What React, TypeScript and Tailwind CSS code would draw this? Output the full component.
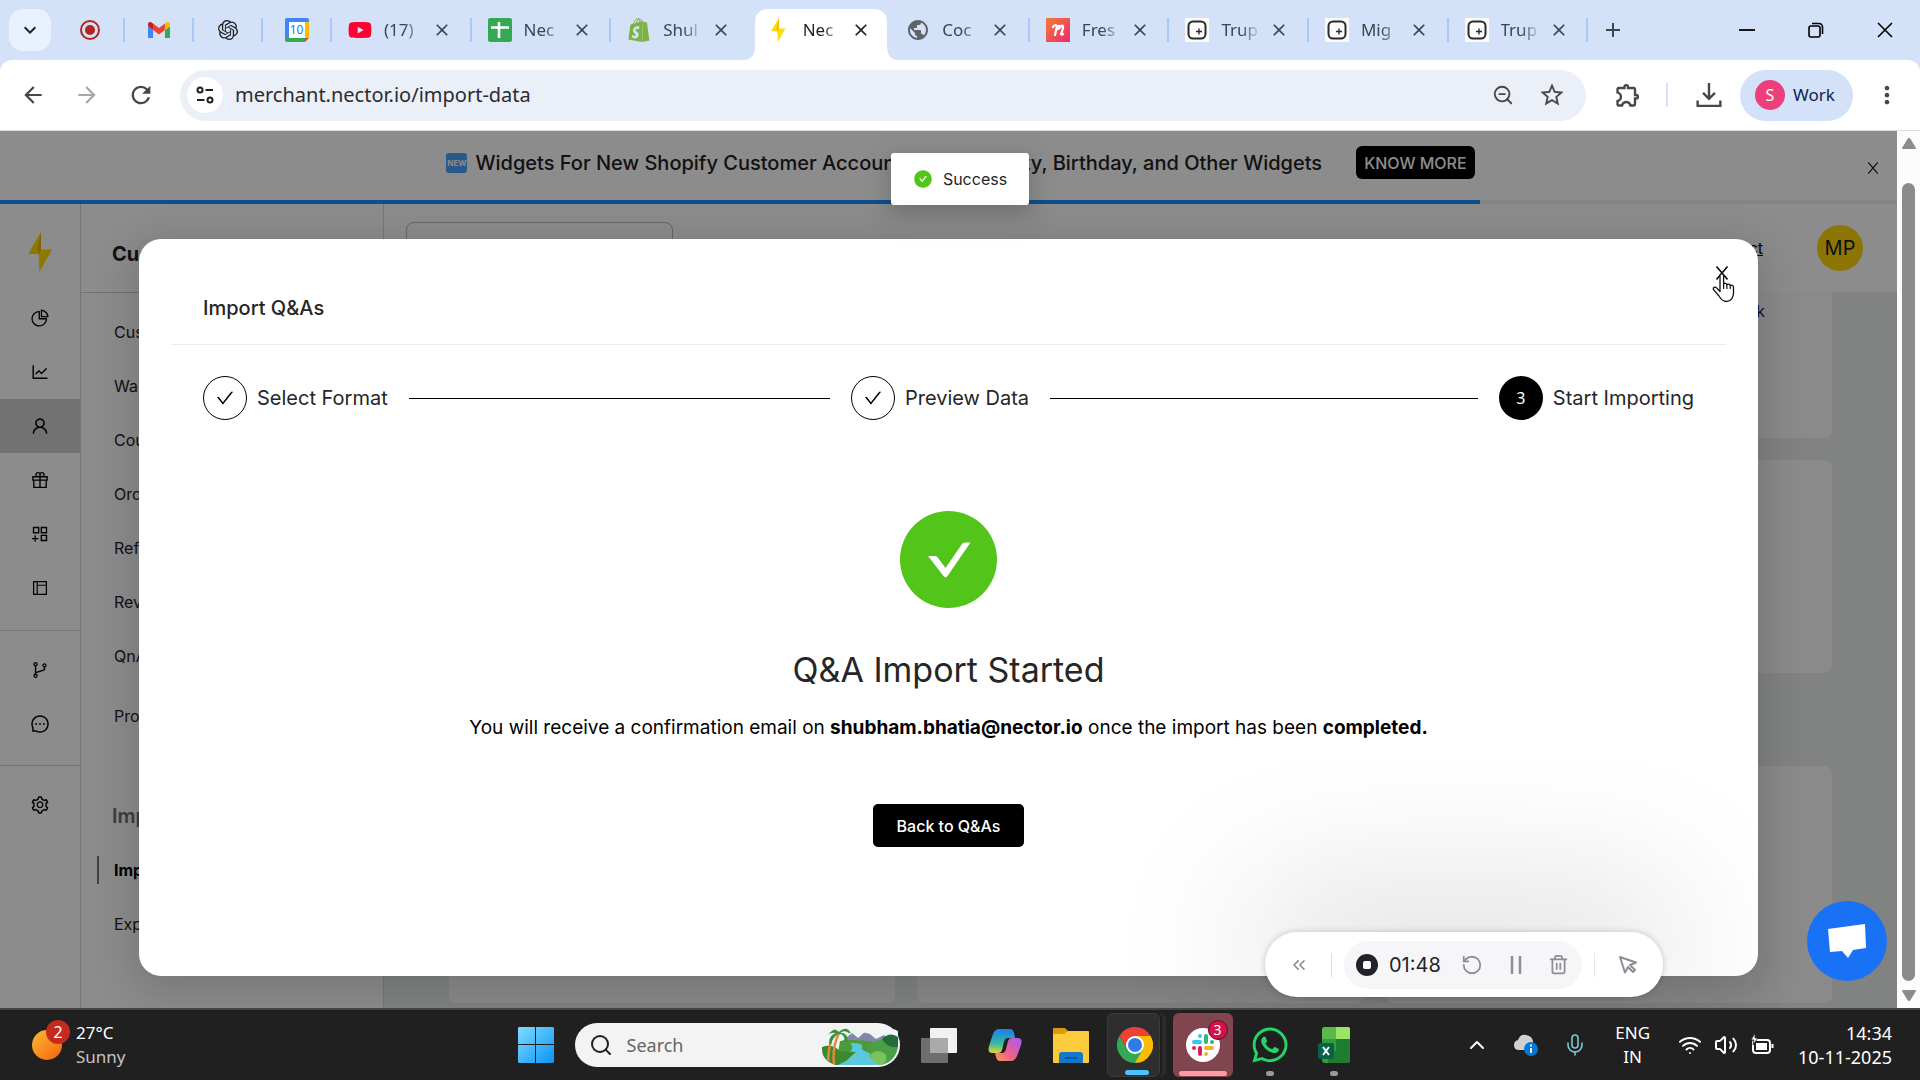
import type { ReactNode } from "react";
import {
  AiOutlineAppstoreAdd, AiOutlineBranches, AiOutlineCheck, AiOutlineGift, AiOutlineLayout,
  AiOutlineLineChart, AiOutlineMessage, AiOutlinePieChart, AiOutlineSetting, AiOutlineUser, AiFillCheckCircle,
} from "react-icons/ai";
import { SiOpenai, SiShopify } from "react-icons/si";
import { FaYoutube, FaWhatsapp } from "react-icons/fa";
import {
  MdArrowBack, MdArrowForward, MdRefresh, MdStarOutline, MdOutlineExtension, MdMoreVert, MdClose, MdAdd,
  MdKeyboardArrowDown, MdPublic,
} from "react-icons/md";
import { ChevronsLeft, ChevronUp, Mic, RotateCcw, Trash2, Volume2, Wifi, ZoomOut, Search } from "lucide-react";

const Bolt = ({ className }: { className: string }) => (
  <svg viewBox="0 0 24 40" className={className} aria-hidden="true">
    <path d="M13 0 0 22h10.500L11.500 40 24 17.500H13z" fill="#ffdc00" />
    <path d="M13 0 9 18l2.500 4 1.500-4.500z" fill="#f2b600" />
  </svg>
);

const Cross = ({ className }: { className: string }) => (
  <svg viewBox="0 0 14 14" className={className} aria-hidden="true">
    <path d="M1.500 0.500 12.500 13.500M12.500 0.500 1.500 13.500" stroke="currentColor" strokeWidth="1.500" />
  </svg>
);

const Gmail = () => (
  <svg viewBox="0 0 24 18" className="w-[22px]">
    <path d="M1.600 18H5.500V8.700L0 4.600v11.800C0 17.300.7 18 1.600 18z" fill="#4285f4" />
    <path d="M18.500 18h3.900c.9 0 1.600-.7 1.600-1.600V4.600l-5.500 4.100z" fill="#34a853" />
    <path d="M18.500 1.600v7.100L24 4.600V2.400C24 .4 21.700-.7 20.100.5z" fill="#fbbc04" />
    <path d="M5.500 8.700V1.600L12 6.500l6.500-4.900v7.100L12 13.600z" fill="#ea4335" />
    <path d="M0 2.400v2.200l5.500 4.100V1.600L3.900.5C2.300-.7 0 .4 0 2.400z" fill="#c5221f" />
  </svg>
);

const Record = () => (
  <svg viewBox="0 0 24 24" className="w-6">
    <circle cx="12" cy="12" r="9" fill="none" stroke="#b3261e" strokeWidth="2" />
    <circle cx="12" cy="12" r="5" fill="#b3261e" />
  </svg>
);

const Calendar = () => (
  <span className="relative flex size-6 items-center justify-center">
    <svg viewBox="0 0 24 24" className="absolute inset-0">
      <path d="M0 2a2 2 0 0 1 2-2h20a2 2 0 0 1 2 2v3H0z" fill="#4285f4" />
      <path d="M0 4h4v16H0z" fill="#4285f4" />
      <path d="M20 4h4v16h-4z" fill="#fbbc04" />
      <path d="M0 20h20v4H2a2 2 0 0 1-2-2z" fill="#34a853" />
      <path d="M20 20h4l-4 4z" fill="#ea4335" />
      <path d="M4 4h16v16H4z" fill="#fff" />
    </svg>
    <span className="relative text-xs leading-none text-[#1a73e8]">10</span>
  </span>
);

const Sheets = () => (
  <svg viewBox="0 0 24 24" className="w-6">
    <rect width="24" height="24" rx="2" fill="#34a853" />
    <path d="M11 4v16M3 9.500h18" stroke="#fff" strokeWidth="2.600" />
  </svg>
);

const Fresh = () => (
  <svg viewBox="0 0 24 24" className="w-6">
    <defs>
      <linearGradient id="fresh" x1="0" y1="0" x2="1" y2="1">
        <stop offset="0" stopColor="#f47b3a" /><stop offset="1" stopColor="#ee2a6b" />
      </linearGradient>
    </defs>
    <rect width="24" height="24" fill="url(#fresh)" />
    <path d="M7 9q2-3 4-1l-2 9M10 12q2-5 4-4 2 1-2 3M14 9q4-3 3 1t-2 6q1 1 2 0" stroke="#fff" strokeWidth="2.200" fill="none" strokeLinecap="round" />
  </svg>
);

const Spark = () => (
  <svg viewBox="0 0 24 24" className="w-6">
    <rect width="24" height="24" fill="#fbfbfb" />
    <rect x="3.500" y="3.500" width="17" height="17" rx="4.500" fill="none" stroke="#2a2a2a" strokeWidth="2" />
    <path d="M14 10.500v6M11 13.500h6" stroke="#2a2a2a" strokeWidth="1.400" />
  </svg>
);

const tabs: { title: string; icon: ReactNode; active?: boolean; line?: boolean }[] = [
  { title: "(17)", icon: <FaYoutube className="size-6 text-[#ff0033]" />, line: true },
  { title: "Nec", icon: <Sheets />, line: true },
  { title: "Shul", icon: <SiShopify className="size-6 text-[#7cb342]" /> },
  { title: "Nec", icon: <Bolt className="h-6" />, active: true },
  { title: "Coc", icon: <MdPublic className="size-6 text-[#5f6368]" />, line: true },
  { title: "Fres", icon: <Fresh />, line: true },
  { title: "Trup", icon: <Spark />, line: true },
  { title: "Mig", icon: <Spark />, line: true },
  { title: "Trup", icon: <Spark />, line: true },
];

const pinned: { label: string; icon: ReactNode }[] = [
  { label: "Recorder", icon: <Record /> },
  { label: "Gmail", icon: <Gmail /> },
  { label: "ChatGPT", icon: <SiOpenai className="size-5" /> },
  { label: "Calendar", icon: <Calendar /> },
];

function TabStrip() {
  return (
    <div className="flex h-[60px] shrink-0 items-center bg-[#d3e1f9] text-[#3c4650]">
      <button aria-label="Search tabs" className="ml-[9px] mr-[5px] flex size-[42px] items-center justify-center rounded-[14px] bg-[#e9f1fe] text-[#1f1f1f]">
        <MdKeyboardArrowDown className="size-6" />
      </button>
      {pinned.map((p) => (
        <button key={p.label} aria-label={p.label} className="flex h-6 w-[69px] items-center justify-center border-r-2 border-[#a8c7fa] text-[#1f1f1f]">
          {p.icon}
        </button>
      ))}
      <div className="flex h-full w-[1256px] min-w-0 items-center">
        {tabs.map((t, i) => (
          <div key={i} className={t.active ? "relative flex h-full min-w-0 flex-1 flex-col justify-end" : "flex h-full min-w-0 flex-1 items-center"}>
            {t.active && (
              <svg viewBox="0 0 156 51" preserveAspectRatio="none" className="absolute -left-2 bottom-0 h-[51px] w-[156px]" aria-hidden="true">
                <path d="M0 51q12 0 12-14V14Q12 0 26 0h104q14 0 14 14v23q0 14 12 14z" fill="#fff" />
              </svg>
            )}
            <div className={t.active ? "relative mb-[18px] flex h-6 items-center pl-4 text-[#1f1f1f]" : t.line ? "flex h-6 w-full items-center border-r-2 border-[#a8c7fa] pl-4" : "flex h-6 w-full items-center pl-4"}>
              <span className="flex w-6 shrink-0 justify-center">{t.icon}</span>
              <span className="ml-3 w-10 shrink-0 whitespace-nowrap text-[17px] leading-6 [mask-image:linear-gradient(to_right,black_50%,transparent_100%)]">{t.title}</span>
              <button aria-label="Close tab" className="ml-2"><MdClose className="size-5" /></button>
            </div>
          </div>
        ))}
      </div>
      <button aria-label="New tab" className="ml-[13px]"><MdAdd className="size-6" /></button>
      <div className="ml-auto flex w-[208px] text-black">
        <button aria-label="Minimize" className="flex flex-1 justify-center">
          <svg viewBox="0 0 16 16" className="size-4"><path d="M0 8h16" stroke="currentColor" strokeWidth="1.800" /></svg>
        </button>
        <button aria-label="Restore" className="flex flex-1 justify-center">
          <svg viewBox="0 0 16 16" className="size-4" fill="none" stroke="currentColor" strokeWidth="1.600"><rect x="1" y="4" width="11" height="11" rx="2" /><path d="M4 1.500h7a3.500 3.500 0 0 1 3.500 3.500v7" /></svg>
        </button>
        <button aria-label="Close" className="flex flex-1 justify-center">
          <svg viewBox="0 0 16 16" className="size-4"><path d="m1 1 14 14M15 1 1 15" stroke="currentColor" strokeWidth="1.600" /></svg>
        </button>
      </div>
    </div>
  );
}

function Toolbar() {
  return (
    <div className="bg-[#d3e1f9]">
      <div className="flex h-[71px] items-center rounded-t-xl border-b border-[#dcdcdc] bg-white text-[#474747]">
        <button aria-label="Back" className="ml-5"><MdArrowBack className="size-[26px]" /></button>
        <button aria-label="Forward" className="ml-7 text-[#a8a8a8]"><MdArrowForward className="size-[26px]" /></button>
        <button aria-label="Reload" className="ml-[27px]"><MdRefresh className="size-7" /></button>
        <div className="ml-[25px] flex h-[51px] min-w-0 flex-1 items-center rounded-full bg-[#ebeff8] pl-[7px] pr-5">
          <button aria-label="Site information" className="flex size-9 items-center justify-center rounded-full bg-white text-[#1f1f1f]">
            <svg viewBox="0 0 20 20" className="size-5" fill="none" stroke="currentColor" strokeWidth="2">
              <circle cx="5" cy="5" r="2.500" /><path d="M10.500 5H18M2 15h7.500" /><circle cx="15" cy="15" r="2.500" />
            </svg>
          </button>
          <input aria-label="Address" defaultValue="merchant.nector.io/import-data" className="ml-3 min-w-0 flex-1 bg-transparent text-xl text-[#2b2c2e] outline-none" />
          <button aria-label="Zoom"><ZoomOut className="size-[22px]" strokeWidth={2} /></button>
          <button aria-label="Bookmark" className="ml-6"><MdStarOutline className="size-7" /></button>
        </div>
        <button aria-label="Extensions" className="ml-7"><MdOutlineExtension className="size-7" /></button>
        <div className="ml-6 h-6 w-[2px] bg-[#d3e1f9]" />
        <button aria-label="Downloads" className="ml-7">
          <svg viewBox="0 0 24 24" className="size-[26px]" fill="none" stroke="currentColor" strokeWidth="2.200"><path d="M12 1v14M6.500 10l5.500 5.500L17.500 10M1.500 17v5h21v-5" /></svg>
        </button>
        <button className="ml-[18px] flex h-[51px] w-[113px] items-center rounded-full bg-[#d3e1f9] pl-[15px] text-[17px] text-[#0b2450]">
          <span className="mr-2 flex size-[30px] items-center justify-center rounded-full bg-[#ec407a] text-base text-white">S</span>
          Work
        </button>
        <button aria-label="Menu" className="ml-5 mr-[19px]"><MdMoreVert className="size-7" /></button>
      </div>
    </div>
  );
}

const subNav = ["Customers", "Wallets", "Coupons", "Orders", "Referrals", "Reviews", "QnAs"];

function RailButton({ label, active, children }: { label: string; active?: boolean; children: ReactNode }) {
  return (
    <button aria-label={label} className={active ? "flex h-[54px] w-full items-center justify-center bg-[#d0d0d0]" : "flex h-[54px] w-full items-center justify-center"}>
      {children}
    </button>
  );
}

function Dashboard() {
  return (
    <div className="flex h-full flex-col overflow-hidden bg-white text-[#222]">
      <div className="flex h-[69px] shrink-0 items-start">
        <div className="flex min-w-0 flex-1 items-center justify-center pl-[54px] pt-[15px]">
          <span className="mr-2 flex h-5 w-[21px] items-center justify-center rounded-[3px] bg-[#4aa3f8] text-[8px] font-bold text-white">NEW</span>
          <span className="whitespace-nowrap text-xl font-medium leading-8">Widgets For New Shopify Customer Accounts: New Loyalty, Birthday, and Other Widgets</span>
          <button className="ml-[34px] h-[33px] whitespace-nowrap rounded-md bg-black px-2 text-base font-medium text-white">KNOW MORE</button>
        </div>
        <button aria-label="Dismiss" className="mr-[18px] mt-[31px]"><Cross className="size-3" /></button>
      </div>
      <div className="h-1 shrink-0 bg-[#f0f0f0]"><div className="h-full w-[78%] bg-[#1890ff]" /></div>
      <div className="flex min-h-0 flex-1">
        <nav aria-label="Main" className="flex w-[81px] shrink-0 flex-col items-center border-r border-[#d8d8d8] pt-7 text-black">
          <Bolt className="h-10" />
          <div className="mt-[19px] w-full border-b border-[#d8d8d8] pb-[15px]">
            <RailButton label="Overview"><AiOutlinePieChart className="size-5" /></RailButton>
            <RailButton label="Analytics"><AiOutlineLineChart className="size-5" /></RailButton>
            <RailButton label="Customers" active><AiOutlineUser className="size-5" /></RailButton>
            <RailButton label="Rewards"><AiOutlineGift className="size-5" /></RailButton>
            <RailButton label="Apps"><AiOutlineAppstoreAdd className="size-5" /></RailButton>
            <RailButton label="Layout"><AiOutlineLayout className="size-[18px]" /></RailButton>
          </div>
          <div className="w-full border-b border-[#d8d8d8] pb-[14px] pt-3">
            <RailButton label="Workflows"><AiOutlineBranches className="size-5" /></RailButton>
            <RailButton label="Messages"><AiOutlineMessage className="size-5" /></RailButton>
          </div>
          <div className="w-full pt-3"><RailButton label="Settings"><AiOutlineSetting className="size-5" /></RailButton></div>
        </nav>
        <aside className="w-[303px] shrink-0 border-r border-[#d8d8d8]">
          <h2 className="flex h-[89px] items-center border-b border-[#d0d0d0] pl-[31px] pt-3 text-xl font-bold">Customers</h2>
          <ul className="pl-[33px] pt-3 text-base">
            {subNav.map((s) => <li key={s} className="flex h-[54px] items-center"><a href="#">{s}</a></li>)}
            <li className="mt-[6px] flex h-[54px] items-center"><a href="#">Products</a></li>
          </ul>
          <h3 className="mt-[46px] flex h-[54px] items-center pl-[31px] text-xl font-semibold text-[#6b7078]">Import &amp; Export</h3>
          <ul className="text-base">
            <li className="flex h-[54px] items-center pl-4"><span className="mr-[15px] h-7 w-[2px] bg-[#777]" /><a href="#" className="font-bold text-black">Import</a></li>
            <li className="flex h-[54px] items-center pl-[33px]"><a href="#">Export</a></li>
          </ul>
        </aside>
        <main className="flex min-w-0 flex-1 flex-col bg-[#eceeee]">
          <div className="flex h-[88px] shrink-0 items-center bg-white pl-[22px] pr-[34px]">
            <input aria-label="Search" placeholder="Search" className="h-[52px] w-[267px] rounded-lg border border-[#bbb] px-5" />
            <a href="#" className="ml-auto mr-[54px] text-base text-black underline">Get Support Contact</a>
            <span className="flex size-[46px] items-center justify-center rounded-full bg-[#ffd60a] text-xl">MP</span>
          </div>
          <div className="flex flex-col gap-[22px] px-[65px]">
            <div className="flex h-[146px] justify-end rounded-b-lg bg-[#fcfcfc] pr-[67px] pt-[7px] text-base text-[#1a2560]">Check the import guide and send feedback</div>
            <div className="h-[213px] rounded-lg bg-[#fcfcfc]" />
            <div className="grid grid-cols-3 gap-[22px] pt-[71px]">
              <div className="h-[237px] rounded-lg bg-[#fcfcfc]" />
              <div className="h-[237px] rounded-lg bg-[#fcfcfc]" />
              <div className="h-[237px] rounded-lg bg-[#fcfcfc]" />
            </div>
          </div>
        </main>
      </div>
    </div>
  );
}

function DoneStep({ label }: { label: string }) {
  return (
    <li className="flex flex-1 items-center">
      <span className="mr-[10px] flex size-11 items-center justify-center rounded-full border border-black text-black"><AiOutlineCheck className="size-5" /></span>
      <span className="whitespace-nowrap">{label}</span>
      <span className="ml-[21px] h-px flex-1 bg-black" />
    </li>
  );
}

function ImportModal() {
  return (
    <div role="dialog" aria-labelledby="import-title" className="relative flex w-full flex-col rounded-[22px] bg-white px-8 pt-[51px] text-[#262626] shadow-[0_10px_40px_8px_rgba(0,0,0,0.14)]">
      <button aria-label="Close" className="absolute right-[29px] top-[27px] text-black"><Cross className="size-[14px]" /></button>
      <svg viewBox="0 0 24 30" className="absolute right-[22px] top-[34px] z-10 h-[30px] w-6" aria-hidden="true">
        <path d="M8 2.500c0-2.300 3.600-2.300 3.600 0V11c1-1.300 3-.8 3.300.7 1-1 3-.6 3.300.9 1.200-1 3.300-.3 3.300 1.700V20c0 4.500-2.500 8.500-7 8.500-4 0-5.800-2.500-7.500-5.500L1.600 16.700C.6 14.700 3 13.200 4.600 14.900L8 18.500z" fill="#fff" stroke="#111" strokeWidth="1.300" strokeLinejoin="round" />
        <path d="M11.600 11v5M14.900 11.700V16M18.200 12.600V16" stroke="#111" strokeWidth="1.200" />
      </svg>
      <div className="border-b border-[#ececec] pb-[18px] pl-8">
        <h1 id="import-title" className="text-xl font-medium leading-9">Import Q&amp;As</h1>
      </div>
      <ol className="mx-8 mt-[31px] flex gap-[21px] text-xl">
        <DoneStep label="Select Format" />
        <DoneStep label="Preview Data" />
        <li className="flex items-center">
          <span className="mr-[10px] flex size-11 items-center justify-center rounded-full bg-black font-['Noto_Sans',sans-serif] text-base text-white">3</span>
          <span className="whitespace-nowrap">Start Importing</span>
        </li>
      </ol>
      <div className="mt-[91px] flex flex-col items-center">
        <svg viewBox="0 0 97 97" className="size-[97px]" aria-hidden="true">
          <circle cx="48.500" cy="48.500" r="48.500" fill="#52c41a" />
          <path d="M28 45h7q1.500 0 2.500 1.200l8 10.800 16.500-24q1-1.500 3-1.500h5.500L47.500 65q-2 2.500-4 0z" fill="#fff" />
        </svg>
        <h2 className="mt-10 text-[34px] leading-[44px]">Q&amp;A Import Started</h2>
        <p className="mt-[22px] whitespace-nowrap text-[19px] leading-7 text-black">
          You will receive a confirmation email on <strong>shubham.bhatia@nector.io</strong> once the import has been <strong>completed.</strong>
        </p>
        <button className="mt-[62px] h-[43px] w-[151px] rounded-[5px] bg-black text-base font-medium text-white">Back to Q&amp;As</button>
      </div>
    </div>
  );
}

function RecorderBar() {
  return (
    <div className="absolute bottom-[11px] right-[257px] flex h-[65px] w-[398px] items-center rounded-[32px] bg-white text-[#8e8e98] shadow-[0_0_6px_rgba(0,0,0,0.2),0_-20px_150px_20px_rgba(0,0,0,0.15)]">
      <button aria-label="Collapse" className="ml-6"><ChevronsLeft className="size-5" /></button>
      <span className="ml-[22px] h-6 w-px bg-[#ddd]" />
      <div className="ml-3 flex h-12 w-[238px] items-center rounded-full bg-[#f6f6f9] pl-3">
        <button aria-label="Stop" className="flex size-[22px] items-center justify-center rounded-full bg-[#22222a]"><span className="size-2 rounded-[2px] bg-white" /></button>
        <span className="ml-[11px] w-[52px] text-xl text-[#22222a]">01:48</span>
        <button aria-label="Restart" className="ml-5"><RotateCcw className="size-[22px]" /></button>
        <button aria-label="Pause" className="ml-[22px]">
          <svg viewBox="0 0 22 22" className="size-[22px]"><path d="M7 2v18M15 2v18" stroke="currentColor" strokeWidth="2.500" /></svg>
        </button>
        <button aria-label="Delete" className="ml-[21px]"><Trash2 className="size-[21px]" /></button>
      </div>
      <span className="ml-3 h-6 w-px bg-[#e6e6e6]" />
      <button aria-label="Pointer" className="ml-[22px]">
        <svg viewBox="0 0 22 22" className="size-[22px]" fill="none" stroke="currentColor" strokeWidth="2" strokeLinejoin="round"><path d="M3 3 8 18.500l3-5.500 5 5 2-2-5-5 6-2.500z" /></svg>
      </button>
    </div>
  );
}

function Scrollbar() {
  return (
    <div className="flex w-[23px] shrink-0 flex-col items-center bg-[#fcfcfc] py-[7px]" aria-hidden="true">
      <svg viewBox="0 0 14 11" className="h-[11px] w-[14px] fill-[#8b8b8b]"><path d="M7 0q1 0 1.500 1L14 10q0 1-1 1H1q-1 0-1-1L5.500 1Q6 0 7 0z" /></svg>
      <div className="mb-[9px] mt-[34px] w-[13px] flex-1 rounded-full bg-[#8b8b8b]" />
      <svg viewBox="0 0 14 11" className="h-[11px] w-[14px] rotate-180 fill-[#8b8b8b]"><path d="M7 0q1 0 1.500 1L14 10q0 1-1 1H1q-1 0-1-1L5.500 1Q6 0 7 0z" /></svg>
    </div>
  );
}

const ChromeLogo = () => (
  <svg viewBox="0 0 36 36" className="size-9">
    <path d="M18 18 33.600 9A18 18 0 0 1 18 36z" fill="#fbbc04" />
    <path d="M18 9h15.600A18 18 0 0 0 2.400 9l7.800 13.500z" fill="#ea4335" />
    <path d="M18 9h15.600L25.800 22.500z" fill="#fbbc04" />
    <path d="M10.200 22.500 2.400 9A18 18 0 0 0 18 36l7.800-13.500z" fill="#34a853" />
    <circle cx="18" cy="18" r="9" fill="#fff" /><circle cx="18" cy="18" r="7" fill="#2f7bea" />
  </svg>
);

const SlackLogo = () => (
  <svg viewBox="0 0 34 34" className="size-[34px]">
    <circle cx="17" cy="17" r="17" fill="#fff" />
    <g strokeWidth="4" strokeLinecap="round">
      <path d="M14 8v0M8 14h6" stroke="#36c5f0" /><path d="M20 8v6M26 14v0" stroke="#2eb67d" />
      <path d="M20 20h6M20 26v0" stroke="#ecb22e" /><path d="M14 20v6M8 20v0" stroke="#e01e5a" />
    </g>
  </svg>
);

const Landscape = () => (
  <svg viewBox="0 0 76 40" className="h-10 w-[76px]" aria-hidden="true">
    <clipPath id="land"><path d="M10 6Q20-2 34 6l20 4Q66 0 76 6v14a20 20 0 0 1-20 20H14Q0 36 0 24V14z" /></clipPath>
    <g clipPath="url(#land)">
      <rect width="76" height="40" fill="#eef5f7" />
      <path d="M18 18 30 8l6 5 8-7 10 8 8-4 14 12H18z" fill="#8587a8" />
      <path d="M18 16q20-3 50 4v8H16z" fill="#4d9a3c" />
      <path d="M28 18q14 0 12 4t14 8l6 10H10l14-10q10-6 4-12z" fill="#5cc8dc" />
      <path d="M0 22q10-4 18 4l16 1-10 9-8 4H0z" fill="#3c8a2e" />
      <path d="M50 18q10-6 26-4v26H60l-12-8q-2-12 2-14z" fill="#4aa045" />
      <path d="M48 30q8-8 16 0 2 8-6 10-8-2-10-10z" fill="#7cc25a" />
      <path d="M60 14q8-8 16-2v10q-10 2-16-8z" fill="#246b3b" />
      <path d="M12 40Q10 22 17 8M6 40Q6 26 9 16" stroke="#dd8b38" strokeWidth="2.500" fill="none" />
      <path d="M17 8Q8 0 3 10q6-5 14-2-10 2-9 11 3-9 9-11 6 0 7 9 3-8-7-9 5-5 11 0-4-7-11 0z" fill="#3c8f35" stroke="#3c8f35" strokeWidth="1.500" />
    </g>
  </svg>
);

function Taskbar() {
  return (
    <footer className="flex h-[72px] shrink-0 items-center border-t-2 border-[#444] bg-[#202020] text-white">
      <div className="flex flex-1 items-center">
        <button className="ml-8 flex items-center text-left text-[17px] leading-6">
          <span className="relative mr-[14px] size-[30px] rounded-full bg-linear-to-br from-[#fbb731] to-[#f2600c]">
            <span className="absolute -top-[10px] left-[14px] flex size-6 items-center justify-center rounded-full bg-[#c42b1c] text-base">2</span>
          </span>
          <span>27°C<br /><span className="text-[#c5c5c5]">Sunny</span></span>
        </button>
      </div>
      <div className="mr-5 flex items-center">
        <button aria-label="Start">
          <svg viewBox="0 0 36 36" className="size-9">
            <defs><linearGradient id="win" x1="0" y1="0" x2="1" y2="1" gradientUnits="objectBoundingBox"><stop offset="0" stopColor="#7fdcff" /><stop offset="1" stopColor="#0a94f5" /></linearGradient></defs>
            <path d="M1 0h16v17H0V1zM18 0h17l1 1v16H18zM0 18h17v18H1l-1-1zM18 18h18v17l-1 1H18z" fill="url(#win)" />
          </svg>
        </button>
        <label className="ml-[21px] flex h-11 w-[325px] items-center rounded-full bg-[#f3f3f3] pl-[14px] pr-[2px] text-[#1f1f1f]">
          <Search className="size-6" />
          <input aria-label="Search" placeholder="Search" className="ml-[14px] min-w-0 flex-1 bg-transparent text-lg outline-none placeholder:text-[#666]" />
          <Landscape />
        </label>
        <button aria-label="Task view" className="ml-[21px]">
          <svg viewBox="0 0 36 36" className="size-9"><rect x="9" y="1" width="27" height="25" rx="1" fill="#f2f2f2" /><rect x="0" y="11" width="27" height="25" rx="1" fill="#6e6e6e" /><path d="M9 11h18v15H9z" fill="#aaa" /></svg>
        </button>
        <button aria-label="Copilot" className="ml-[30px]">
          <svg viewBox="0 0 36 36" className="size-9">
            <defs>
              <linearGradient id="cp1" x1="0" y1="0" x2="0" y2="1"><stop offset="0" stopColor="#1a7ef0" /><stop offset=".6" stopColor="#36b8a0" /><stop offset="1" stopColor="#e6d23c" /></linearGradient>
              <linearGradient id="cp2" x1="1" y1="0" x2="0" y2="1"><stop offset="0" stopColor="#a25cf0" /><stop offset=".6" stopColor="#f0608c" /><stop offset="1" stopColor="#fba04a" /></linearGradient>
            </defs>
            <path d="M12 2h11q3 0 4 4l1 5h-7q-3 0-4 4l-2 8q-1 3-4 3H5q-5 0-3-7l4-12q2-5 6-5z" fill="url(#cp1)" />
            <path d="M24 34H13q-3 0-4-4l-1-4h7q3 0 4-4l2-8q1-3 4-3h6q5 0 3 7l-4 11q-2 5-6 5z" fill="url(#cp2)" />
          </svg>
        </button>
        <button aria-label="File Explorer" className="ml-[30px]">
          <svg viewBox="0 0 36 36" className="size-9"><path d="M0 2q0-1 1-1h11l3 3v6H0z" fill="#d99c0b" /><path d="M0 7h11l4-3h20q1 0 1 1v30q0 1-1 1H1q-1 0-1-1z" fill="#fccb3b" /><path d="M6 36V28q0-3 3-3h18q3 0 3 3v8z" fill="#1478c8" /><path d="M12 31h12" stroke="#0b4f8f" strokeWidth="1.500" /></svg>
        </button>
        <button aria-label="Chrome" className="ml-[18px] flex rounded-md bg-[#2b2b2b] pr-[6px]">
          <span className="relative flex h-[64px] w-[53px] items-center justify-center rounded-md border border-[#3a3a3a] bg-[#2e2e2e] pl-1 shadow-[2px_0_0_#1c1c1c]">
            <ChromeLogo /><span className="absolute bottom-[1px] left-[17px] h-[5px] w-6 rounded-full bg-[#4cc2ff]" />
          </span>
        </button>
        <button aria-label="Slack, 3 notifications" className="relative ml-[7px] flex h-[64px] w-[60px] items-center justify-center rounded-md bg-[#80454f]">
          <SlackLogo />
          <span className="absolute right-[5px] top-[7px] flex size-5 items-center justify-center rounded-full border border-[#5a1020] bg-[#d3114a] text-sm">3</span>
          <span className="absolute bottom-[1px] h-[5px] w-12 rounded-full bg-[#ff99a4]" />
        </button>
        <button aria-label="WhatsApp" className="relative ml-4 flex h-[64px] w-[42px] items-center justify-center">
          <FaWhatsapp className="size-10 text-[#25d366]" /><span className="absolute bottom-[1px] h-[5px] w-2 rounded-full bg-[#999]" />
        </button>
        <button aria-label="Excel" className="relative ml-[22px] flex h-[64px] w-[42px] items-center justify-center">
          <svg viewBox="0 0 32 36" className="h-9"><path d="M4 3q0-3 3-3h23q2 0 2 2v32q0 2-2 2H7q-3 0-3-3z" fill="#2f9e3f" /><path d="M4 12V3q0-3 3-3h11v12z" fill="#5cb848" /><path d="M18 0h12q2 0 2 2v10H18z" fill="#9be564" /><path d="M18 24V12h14v22q0 2-2 2H10V24z" fill="#1f7d31" /><rect y="16" width="16" height="16" rx="2" fill="#0b6145" /><path d="m5 20 6 8M11 20l-6 8" stroke="#fff" strokeWidth="2" /></svg>
          <span className="absolute bottom-[1px] h-[5px] w-2 rounded-full bg-[#999]" />
        </button>
      </div>
      <div className="flex flex-1 items-center justify-end pr-7 text-lg leading-6">
        <button aria-label="Show hidden icons"><ChevronUp className="size-6" /></button>
        <button aria-label="OneDrive" className="ml-6">
          <svg viewBox="0 0 26 24" className="h-6"><path d="M6 17q-5 0-5-5 0-4 4-5 2-6 8-5 6 1 7 6v9z" fill="#d0d0d0" /><circle cx="18" cy="16" r="7" fill="#0078d4" /><path d="M18 15v5M18 11.500v2" stroke="#fff" strokeWidth="1.800" /></svg>
        </button>
        <button aria-label="Microphone" className="ml-6"><Mic className="size-6 text-[#7cc7d8]" strokeWidth={1.6} /></button>
        <button className="ml-7 text-center text-[17px]">ENG<br />IN</button>
        <button aria-label="Network, volume and battery" className="ml-7 flex items-center gap-3">
          <Wifi className="size-6" /><Volume2 className="size-6" />
          <svg viewBox="0 0 24 24" className="size-6" fill="none" stroke="currentColor" strokeWidth="2"><rect x="3" y="7" width="17" height="13" rx="3" /><path d="M6 10h11v7H6z" fill="currentColor" stroke="none" /><path d="M22.500 11v4" /><path d="M5 0 1 7h3L3 12l5-7H5z" fill="#fff" stroke="#202020" strokeWidth=".8" /></svg>
        </button>
        <button className="ml-6 text-right">14:34<br />10-11-2025</button>
      </div>
    </footer>
  );
}

export default function App() {
  return (
    <div className="flex h-screen flex-col overflow-hidden font-['Noto_Sans',sans-serif]">
      <TabStrip />
      <Toolbar />
      <div className="relative flex min-h-0 flex-1 overflow-hidden font-['Inter',sans-serif]">
        <div className="relative min-w-0 flex-1">
          <Dashboard />
          <div className="absolute inset-0 flex overflow-hidden bg-black/45 px-[139px] pb-8 pt-[108px]">
            <ImportModal />
          </div>
          <button aria-label="Open chat" className="absolute bottom-[27px] right-[10px] flex size-20 items-center justify-center rounded-full bg-[#1972f5]">
            <svg viewBox="0 0 40 34" className="w-10"><path d="M1 5 38 0l1 24-13 2-5 8-6-7-12 1z" fill="#fff" /></svg>
          </button>
        </div>
        <Scrollbar />
        <div className="pointer-events-none absolute inset-x-0 top-[22px] flex justify-center">
          <div role="status" className="flex h-[52px] items-center rounded-[3px] bg-white pl-[22px] pr-[22px] text-base text-[#262626] shadow-[0_9px_28px_8px_rgba(0,0,0,0.08),0_6px_16px_rgba(0,0,0,0.12)]">
            <AiFillCheckCircle className="mr-[10px] size-5 text-[#52c41a]" />Success
          </div>
        </div>
        <RecorderBar />
      </div>
      <Taskbar />
    </div>
  );
}
